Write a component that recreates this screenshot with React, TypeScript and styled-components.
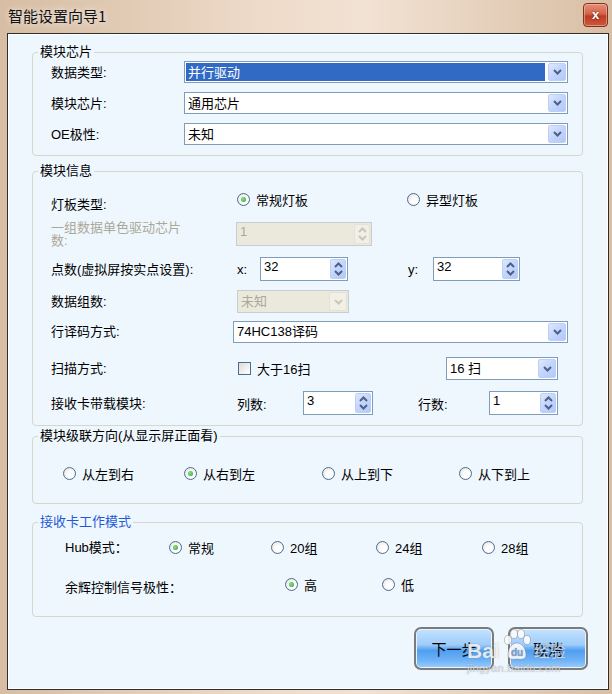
import React from "react";
import styled, { createGlobalStyle, css } from "styled-components";

const FONT = `"Liberation Sans", "Noto Sans CJK SC", sans-serif`;

const GlobalStyle = createGlobalStyle`
  html, body { margin: 0; padding: 0; }
  body { font-family: ${FONT}; font-size: 13px; color: #000; background: #dcc4ac; }
`;

const Window = styled.div`
  position: relative;
  width: 612px;
  height: 694px;
  box-sizing: border-box;
  background: linear-gradient(to right, #d6bda3 0%, #efdccb 45%, #f2e2d3 60%, #d8bea4 100%);
  display: flex;
  flex-direction: column;
  overflow: hidden;
`;

const TitleBar = styled.div`
  height: 33px;
  flex: none;
  display: flex;
  align-items: center;
  justify-content: space-between;
  padding: 0 4px 0 8px;
`;

const Title = styled.div`
  font-family: "Noto Sans CJK SC", sans-serif;
  font-size: 15px;
  color: #111;
  text-shadow: 0 0 6px rgba(255, 255, 255, 0.9);
  margin-top: -2px;
`;

const CloseBtn = styled.div`
  width: 25px;
  height: 24px;
  box-sizing: border-box;
  margin-top: -4px;
  border: 1px solid #7e3220;
  border-radius: 4px;
  background: linear-gradient(#e58f78 0%, #d4644a 45%, #bc3b22 55%, #cc5a3e 100%);
  box-shadow: inset 0 0 0 1px rgba(255, 200, 180, 0.5);
  color: #fff;
  font: bold 13px "Liberation Sans", sans-serif;
  display: flex;
  align-items: center;
  justify-content: center;
  text-shadow: 0 0 2px #5a1808;
`;

const Client = styled.div`
  flex: 1;
  margin: 0 3px 4px 7px;
  border: 1px solid #2e2e2e;
  box-shadow: inset 0 0 0 1px #ffffff;
  background: #eff7fe;
  display: flex;
  flex-direction: column;
`;

const Group = styled.fieldset<{ $top: number }>`
  margin: ${(p) => p.$top}px 25px 0 24px;
  padding: 0;
  border: 1px solid #d3d8c9;
  border-radius: 4px;
  min-width: 0;
`;

const Legend = styled.legend<{ $blue?: boolean }>`
  margin-left: 5px;
  padding: 0 2px;
  line-height: 16px;
  font-size: 13px;
  color: ${(p) => (p.$blue ? "#1f5ad8" : "#000")};
`;

const Body = styled.div<{ $pad: string }>`
  padding: ${(p) => p.$pad};
`;

const ChipGrid = styled.div`
  display: grid;
  grid-template-columns: 133px 1fr;
  grid-auto-rows: 22px;
  row-gap: 9px;
  align-items: center;
`;

const Row = styled.div<{ $h: number; $label?: number }>`
  display: grid;
  grid-template-columns: ${(p) => p.$label ?? 182}px 1fr;
  height: ${(p) => p.$h}px;
  align-items: center;
`;

const Label = styled.div<{ $muted?: boolean; $drop?: number }>`
  white-space: nowrap;
  line-height: 13px;
  color: ${(p) => (p.$muted ? "#aca899" : "#000")};
  padding-top: ${(p) => p.$drop ?? 0}px;
  ${(p) =>
    p.$muted &&
    css`
      white-space: normal;
      width: 130px;
    `}
`;

const Line = styled.div`
  display: flex;
  align-items: center;
`;

const Slot = styled.div<{ $w?: number; $off?: number }>`
  flex: none;
  width: ${(p) => (p.$w ? `${p.$w}px` : "auto")};
  margin-left: ${(p) => p.$off ?? 0}px;
  display: flex;
  align-items: center;
`;

const Field = styled.div<{ $w?: number; $h?: number; $disabled?: boolean }>`
  box-sizing: border-box;
  width: ${(p) => (p.$w ? `${p.$w}px` : "100%")};
  height: ${(p) => p.$h ?? 22}px;
  border: 1px solid ${(p) => (p.$disabled ? "#c5cdd6" : "#7f9db9")};
  background: ${(p) => (p.$disabled ? "#ebe9dc" : "#fff")};
  padding: 1px;
  display: flex;
  align-items: stretch;
`;

const FieldText = styled.div<{ $hl?: boolean; $disabled?: boolean; $top?: boolean }>`
  flex: 1;
  display: flex;
  align-items: ${(p) => (p.$top ? "flex-start" : "center")};
  padding-left: 2px;
  margin-right: 3px;
  line-height: 15px;
  white-space: nowrap;
  overflow: hidden;
  color: ${(p) => (p.$hl ? "#fff" : p.$disabled ? "#aca899" : "#000")};
  background: ${(p) => (p.$hl ? "#316ac5" : "transparent")};
`;

const ArrowBtn = styled.div<{ $disabled?: boolean; $w: number }>`
  flex: none;
  width: ${(p) => p.$w}px;
  box-sizing: border-box;
  border: 1px solid ${(p) => (p.$disabled ? "#e4e2d6" : "#bcd0f7")};
  border-radius: 2px;
  background: ${(p) =>
    p.$disabled
      ? "#f2f0e6"
      : "linear-gradient(135deg, #dde8fe 0%, #c3d5fd 50%, #b2c8f6 100%)"};
  display: flex;
  flex-direction: column;
  align-items: center;
  justify-content: center;
  gap: 2px;
`;

const Chev = ({ up, color }: { up?: boolean; color: string }) => (
  <svg width="9" height="6" viewBox="0 0 9 6">
    <polyline
      points={up ? "1,5 4.5,1.5 8,5" : "1,1 4.5,4.5 8,1"}
      fill="none"
      stroke={color}
      strokeWidth="2"
    />
  </svg>
);

const Select = ({
  text,
  w,
  h,
  hl,
  disabled,
}: {
  text: string;
  w?: number;
  h?: number;
  hl?: boolean;
  disabled?: boolean;
}) => (
  <Field $w={w} $h={h} $disabled={disabled}>
    <FieldText $hl={hl} $disabled={disabled}>
      {text}
    </FieldText>
    <ArrowBtn $w={18} $disabled={disabled}>
      <Chev color={disabled ? "#c9c7ba" : "#4d6185"} />
    </ArrowBtn>
  </Field>
);

const Spin = ({ text, w, disabled }: { text: string; w: number; disabled?: boolean }) => (
  <Field $w={w} $h={24} $disabled={disabled}>
    <FieldText $disabled={disabled} $top>
      {text}
    </FieldText>
    <ArrowBtn $w={16} $disabled={disabled}>
      <Chev up color={disabled ? "#c9c7ba" : "#4d6185"} />
      <Chev color={disabled ? "#c9c7ba" : "#4d6185"} />
    </ArrowBtn>
  </Field>
);

const RadioWrap = styled.div`
  display: flex;
  align-items: center;
  gap: 6px;
  white-space: nowrap;
`;

const RadioCircle = styled.span<{ $on?: boolean }>`
  position: relative;
  width: 13px;
  height: 13px;
  box-sizing: border-box;
  border-radius: 50%;
  border: 1px solid #4a6d96;
  background: radial-gradient(circle at 60% 60%, #ffffff 30%, #dcdcd4 100%);
  flex: none;
  ${(p) =>
    p.$on &&
    css`
      &::after {
        content: "";
        position: absolute;
        left: 3px;
        top: 3px;
        width: 5px;
        height: 5px;
        border-radius: 50%;
        background: radial-gradient(circle at 40% 40%, #8ee58c, #21a121);
      }
    `}
`;

const Radio = ({ label, on }: { label: string; on?: boolean }) => (
  <RadioWrap>
    <RadioCircle $on={on} />
    <span>{label}</span>
  </RadioWrap>
);

const CheckBox = styled.span`
  width: 13px;
  height: 13px;
  box-sizing: border-box;
  border: 1px solid #4a6d96;
  background: linear-gradient(135deg, #dcdcd5 0%, #ffffff 100%);
  flex: none;
`;

const RadioLine = styled.div<{ $cols: string; $h: number; $end?: boolean }>`
  display: grid;
  grid-template-columns: ${(p) => p.$cols};
  height: ${(p) => p.$h}px;
  align-items: ${(p) => (p.$end ? "end" : "center")};
`;

const ButtonBar = styled.div`
  display: flex;
  justify-content: flex-end;
  gap: 14px;
  padding: 10px 20px 0 0;
`;

const DlgButton = styled.div`
  width: 80px;
  height: 43px;
  box-sizing: border-box;
  border: 2px solid #7b7b7b;
  border-radius: 7px;
  box-shadow: inset 0 0 0 1px #e8f3ff;
  background: linear-gradient(#c4e2ff 0%, #9fcdfb 40%, #4f9ef0 55%, #6eb2f7 80%, #9ccdfc 100%);
  display: flex;
  align-items: center;
  justify-content: center;
  font-family: "Noto Sans CJK SC", sans-serif;
  font-size: 15px;
  color: #000;
`;

const Watermark = styled.div`
  position: absolute;
  left: 467px;
  top: 629px;
  pointer-events: none;
  color: rgba(255, 255, 255, 0.85);
  text-shadow: 0 0 1px rgba(90, 90, 90, 0.6);
  font-family: "Liberation Sans", sans-serif;
`;

const MarkTop = styled.div`
  display: flex;
  align-items: flex-end;
  gap: 2px;
`;

const MarkBai = styled.span`
  font-size: 21px;
  font-weight: bold;
  line-height: 1;
  margin-bottom: 0;
`;

const MarkJing = styled.span`
  font-family: "Noto Sans CJK SC", sans-serif;
  font-size: 16px;
  line-height: 1;
  margin-bottom: 3px;
  color: rgba(235, 240, 250, 0.75);
`;

const MarkUrl = styled.div`
  font-size: 11px;
  margin-top: 1px;
  letter-spacing: 0.3px;
  color: rgba(230, 235, 245, 0.8);
`;

const Paw = () => (
  <svg width="30" height="32" viewBox="0 0 30 32">
    <g fill="rgba(255,255,255,0.85)" stroke="rgba(110,110,110,0.5)" strokeWidth="0.8">
      <ellipse cx="6" cy="11" rx="3.5" ry="4.5" />
      <ellipse cx="12" cy="5" rx="3.5" ry="4.5" />
      <ellipse cx="19" cy="5" rx="3.5" ry="4.5" />
      <ellipse cx="25" cy="11" rx="3.5" ry="4.5" />
      <path d="M6 26 C6 18 11 14 15 14 C19 14 24 18 24 26 C24 30 20 31 15 30 C10 31 6 30 6 26 Z" />
    </g>
    <text x="15" y="27" textAnchor="middle" fontSize="10" fontWeight="bold" fill="#7aa0d0" fontFamily="Liberation Sans, sans-serif">
      du
    </text>
  </svg>
);

export default function App() {
  return (
    <>
      <GlobalStyle />
      <Window>
        <TitleBar>
          <Title>智能设置向导1</Title>
          <CloseBtn>x</CloseBtn>
        </TitleBar>
        <Client>
          <Group $top={10}>
            <Legend>模块芯片</Legend>
            <Body $pad="1px 14px 10px 18px">
              <ChipGrid>
                <Label>数据类型:</Label>
                <Select text="并行驱动" hl />
                <Label>模块芯片:</Label>
                <Select text="通用芯片" />
                <Label>OE极性:</Label>
                <Select text="未知" />
              </ChipGrid>
            </Body>
          </Group>

          <Group $top={7}>
            <Legend>模块信息</Legend>
            <Body $pad="3px 14px 9px 18px">
              <Row $h={34}>
                <Label $drop={10}>灯板类型:</Label>
                <Line>
                  <Slot $off={4} $w={170}>
                    <Radio label="常规灯板" on />
                  </Slot>
                  <Radio label="异型灯板" />
                </Line>
              </Row>
              <Row $h={35}>
                <Label $muted>一组数据单色驱动芯片数:</Label>
                <Line>
                  <Slot $off={3}>
                    <Spin text="1" w={136} disabled />
                  </Slot>
                </Line>
              </Row>
              <Row $h={36}>
                <Label>点数(虚拟屏按实点设置):</Label>
                <Line>
                  <Slot $off={4} $w={23}>x:</Slot>
                  <Slot $w={148}>
                    <Spin text="32" w={88} />
                  </Slot>
                  <Slot $w={25}>y:</Slot>
                  <Spin text="32" w={87} />
                </Line>
              </Row>
              <Row $h={29}>
                <Label>数据组数:</Label>
                <Line>
                  <Slot $off={4}>
                    <Select text="未知" w={112} h={23} disabled />
                  </Slot>
                </Line>
              </Row>
              <Row $h={31}>
                <Label>行译码方式:</Label>
                <Select text="74HC138译码" />
              </Row>
              <Row $h={43}>
                <Label>扫描方式:</Label>
                <Line>
                  <Slot $off={5} $w={208}>
                    <RadioWrap>
                      <CheckBox />
                      <span>大于16扫</span>
                    </RadioWrap>
                  </Slot>
                  <Select text="16 扫" w={112} h={23} />
                </Line>
              </Row>
              <Row $h={26}>
                <Label>接收卡带载模块:</Label>
                <Line>
                  <Slot $off={4} $w={66}>列数:</Slot>
                  <Slot $w={115}>
                    <Spin text="3" w={70} />
                  </Slot>
                  <Slot $w={71}>行数:</Slot>
                  <Spin text="1" w={69} />
                </Line>
              </Row>
            </Body>
          </Group>

          <Group $top={2}>
            <Legend>模块级联方向(从显示屏正面看)</Legend>
            <Body $pad="19px 0 20px 30px">
              <RadioLine $cols="121px 138px 137px 1fr" $h={20}>
                <Radio label="从左到右" />
                <Radio label="从右到左" on />
                <Radio label="从上到下" />
                <Radio label="从下到上" />
              </RadioLine>
            </Body>
          </Group>

          <Group $top={10}>
            <Legend $blue>接收卡工作模式</Legend>
            <Body $pad="7px 0 22px 32px">
              <RadioLine $cols="104px 102px 105px 106px 1fr" $h={20}>
                <Label>Hub模式：</Label>
                <Radio label="常规" on />
                <Radio label="20组" />
                <Radio label="24组" />
                <Radio label="28组" />
              </RadioLine>
              <RadioLine $cols="220px 97px 1fr" $h={37} $end>
                <Label>余辉控制信号极性：</Label>
                <Radio label="高" on />
                <Radio label="低" />
              </RadioLine>
            </Body>
          </Group>

          <ButtonBar>
            <DlgButton>下一步</DlgButton>
            <DlgButton>取消</DlgButton>
          </ButtonBar>
        </Client>
        <Watermark>
          <MarkTop>
            <MarkBai>Bai</MarkBai>
            <Paw />
            <MarkJing>经验</MarkJing>
          </MarkTop>
          <MarkUrl>jingyan.baidu.com</MarkUrl>
        </Watermark>
      </Window>
    </>
  );
}
